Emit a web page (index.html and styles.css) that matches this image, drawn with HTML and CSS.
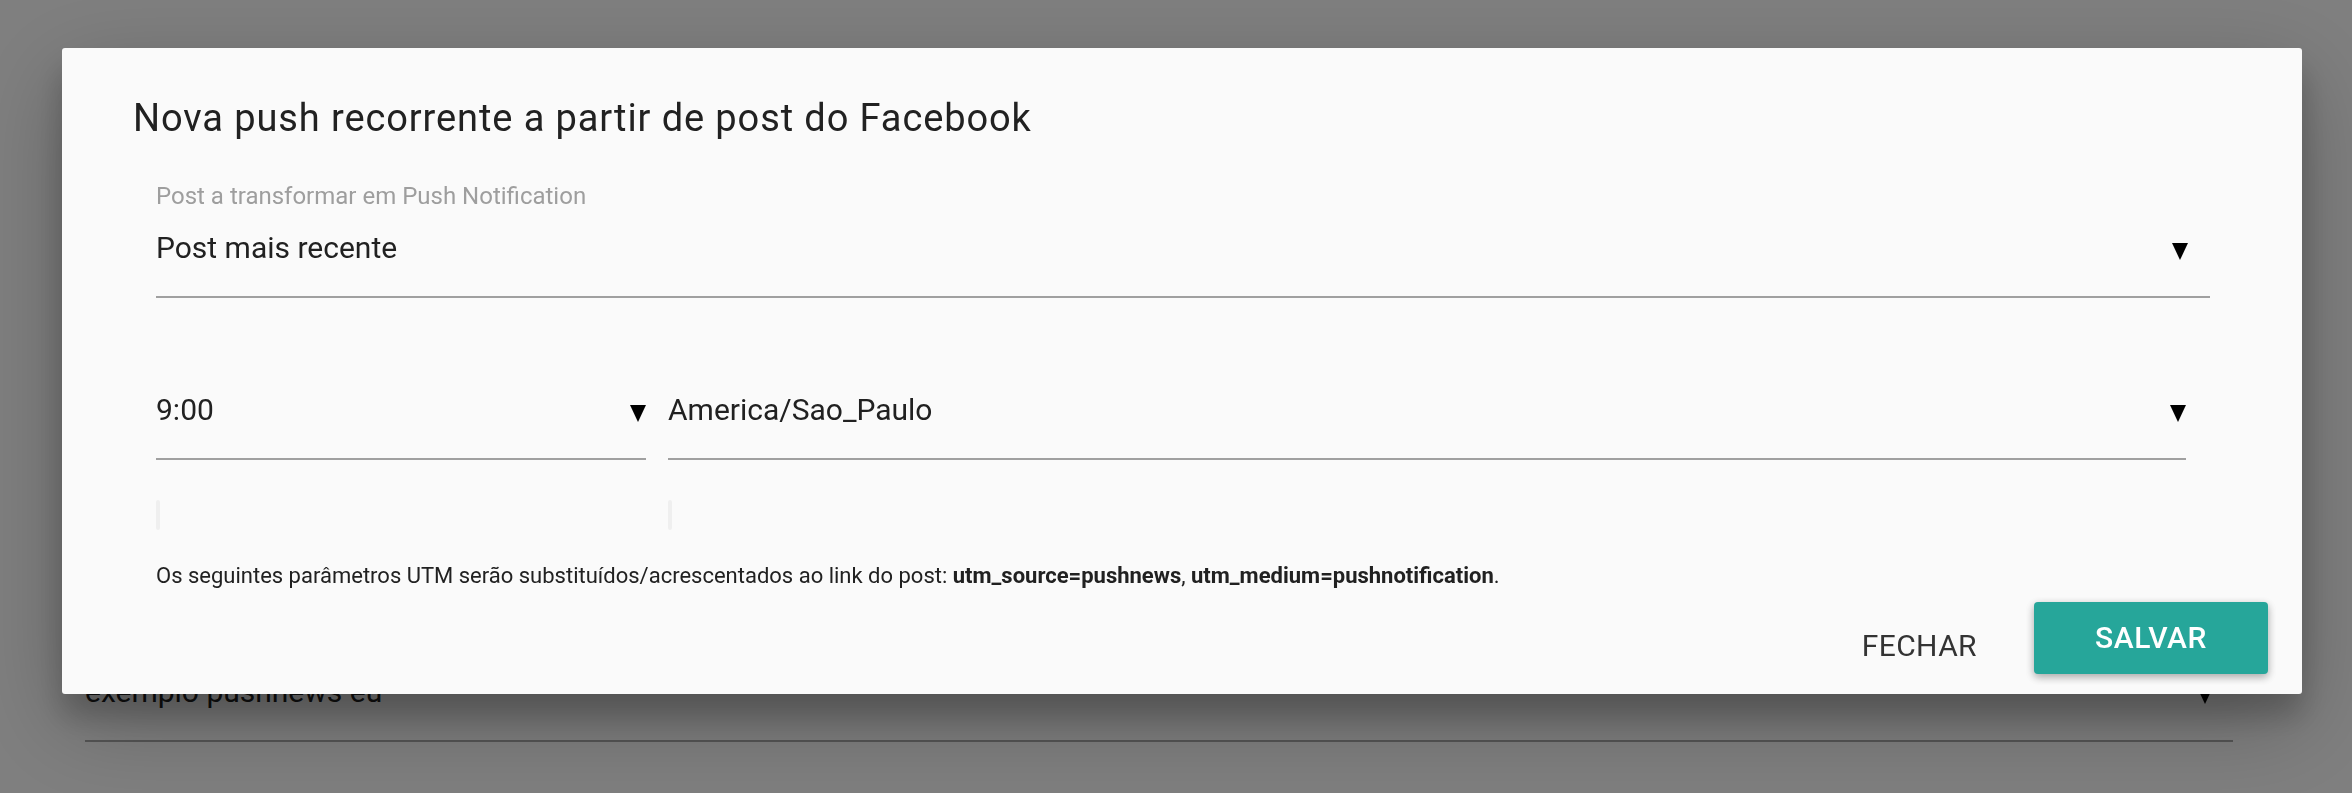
FILE: index.html
```html
<!DOCTYPE html>
<html lang="pt">
<head>
  <meta charset="UTF-8" />
  <meta name="viewport" content="width=device-width, initial-scale=1.0"/>
  <title>Nova push recorrente</title>
  <link rel="stylesheet" href="styles.css">
</head>
<body>
  <div class="page">
    <div class="page-select">
      <span>exemplo pushnews eu</span>
      <svg class="caret" width="16" height="17" viewBox="0 0 16 17"><path d="M0 0H16L8 17Z"/></svg>
    </div>
  </div>

  <div class="overlay"></div>

  <div class="dialog">
    <h3 class="dialog-title">Nova push recorrente a partir de post do Facebook</h3>

    <div class="dialog-body">
      <div class="field">
        <label class="field-label">Post a transformar em Push Notification</label>
        <div class="select select-inset">
          <span>Post mais recente</span>
          <svg class="caret" width="16" height="17" viewBox="0 0 16 17"><path d="M0 0H16L8 17Z"/></svg>
        </div>
      </div>

      <div class="field-row">
        <div class="select">
          <span>9:00</span>
          <svg class="caret" width="16" height="17" viewBox="0 0 16 17"><path d="M0 0H16L8 17Z"/></svg>
        </div>
        <div class="select">
          <span>America/Sao_Paulo</span>
          <svg class="caret" width="16" height="17" viewBox="0 0 16 17"><path d="M0 0H16L8 17Z"/></svg>
        </div>
      </div>

      <div class="field-row extra-row">
        <div class="empty-bar"></div>
        <div class="empty-bar"></div>
      </div>

      <p class="utm-note">Os seguintes parâmetros UTM serão substituídos/acrescentados ao link do post: <b>utm_source=pushnews</b>, <b>utm_medium=pushnotification</b>.</p>
    </div>

    <div class="dialog-actions">
      <button type="button" class="flat-btn">FECHAR</button>
      <button type="button" class="save-btn">SALVAR</button>
    </div>
  </div>
</body>
</html>
```

FILE: styles.css
```css
body {
  font-family: Roboto, "Noto Sans", Arial, sans-serif;
  background-color: #ffffff;
  margin: 0;
  height: 100vh;
  overflow: hidden;
}

.page {
  padding: 674px 119px 0 85px;
}

.page-select {
  display: flex;
  justify-content: space-between;
  align-items: center;
  padding-right: 20px;
  padding-bottom: 30px;
  border-bottom: 2px solid #aaaaaa;
  font-size: 30px;
  line-height: 36px;
  color: #212121;
}

.overlay {
  position: fixed;
  top: 0;
  left: 0;
  right: 0;
  bottom: 0;
  background-color: rgba(0, 0, 0, 0.5);
}

.dialog {
  position: fixed;
  top: 48px;
  left: 62px;
  width: 2240px;
  height: 646px;
  box-sizing: border-box;
  padding: 48px 34px 20px 71px;
  background-color: #fafafa;
  border-radius: 3px;
  box-shadow: 0 28px 90px rgba(0, 0, 0, 0.25), 0 22px 30px rgba(0, 0, 0, 0.2);
}

.dialog-title {
  margin: 0;
  font-size: 38px;
  line-height: 44px;
  letter-spacing: 0.9px;
  font-weight: 400;
  color: #212121;
}

.dialog-body {
  margin: 42px 58px 0 23px;
}

.field-label {
  display: block;
  font-size: 24px;
  line-height: 28px;
  color: #9e9e9e;
  margin-bottom: 20px;
}

.select {
  display: flex;
  justify-content: space-between;
  align-items: center;
  padding-bottom: 30px;
  border-bottom: 2px solid #a0a0a0;
  font-size: 30px;
  line-height: 36px;
  color: #212121;
}

.select-inset {
  padding-right: 22px;
}

.caret {
  display: block;
  margin-top: 7px;
  fill: #000000;
}

.field-row {
  display: grid;
  grid-template-columns: 490px 1fr;
  column-gap: 22px;
  margin-top: 94px;
  margin-right: 24px;
}

.extra-row {
  margin-top: 40px;
}

.empty-bar {
  width: 4px;
  height: 30px;
  border-radius: 2px;
  background-color: #efefef;
}

.utm-note {
  margin: 33px 0 0;
  font-size: 22px;
  line-height: 26px;
  color: #212121;
}

.utm-note b {
  font-weight: 700;
}

.dialog-actions {
  display: flex;
  justify-content: flex-end;
  align-items: flex-start;
  margin-top: 13px;
}

.flat-btn {
  font-family: inherit;
  background: none;
  border: none;
  padding: 0 24px;
  margin: 8px 33px 0 0;
  height: 72px;
  line-height: 72px;
  font-size: 30px;
  letter-spacing: 0.4px;
  color: #333333;
  cursor: pointer;
}

.save-btn {
  font-family: inherit;
  min-width: 234px;
  height: 72px;
  line-height: 72px;
  padding: 0 16px;
  border: none;
  border-radius: 4px;
  background-color: #26a69a;
  color: #ffffff;
  font-size: 30px;
  letter-spacing: 0.6px;
  font-weight: 500;
  cursor: pointer;
  box-shadow: 0 3px 9px rgba(0, 0, 0, 0.16), 0 3px 9px rgba(0, 0, 0, 0.2);
}

.save-btn:hover {
  background-color: #229488;
}
```
